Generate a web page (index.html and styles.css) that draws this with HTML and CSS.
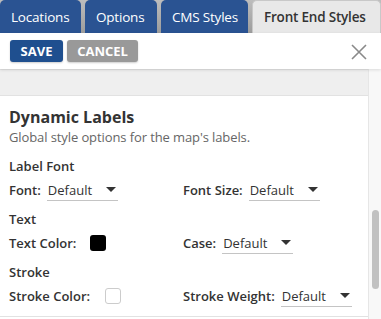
FILE: index.html
```html
<!DOCTYPE html>
<html lang="en">
<head>
    <meta charset="UTF-8">
    <title>Front End Styles</title>
    <link rel="stylesheet" href="styles.css">
</head>
<body>
    <div class="tabs">
        <div class="tab">Locations</div>
        <div class="tab">Options</div>
        <div class="tab">CMS Styles</div>
        <div class="tab active">Front End Styles</div>
    </div>

    <div class="toolbar">
        <button class="btn btn-save">Save</button>
        <button class="btn btn-cancel">Cancel</button>
        <svg class="close" width="16" height="16" viewBox="0 0 16 16">
            <path d="M1 1L15 15M15 1L1 15" stroke="#8a8a8a" stroke-width="1.6" fill="none"/>
        </svg>
    </div>

    <div class="body">
        <div class="panel">
            <div class="panel-top"></div>
            <div class="section">
                <h3>Dynamic Labels</h3>
                <p class="desc">Global style options for the map's labels.</p>

                <div class="group-title">Label Font</div>
                <div class="row">
                    <div class="field">
                        <span class="label">Font:</span>
                        <span class="select">Default <i class="caret"></i></span>
                    </div>
                    <div class="field">
                        <span class="label">Font Size:</span>
                        <span class="select">Default <i class="caret"></i></span>
                    </div>
                </div>

                <div class="group-title">Text</div>
                <div class="row">
                    <div class="field">
                        <span class="label">Text Color:</span>
                        <span class="swatch swatch-black"></span>
                    </div>
                    <div class="field">
                        <span class="label">Case:</span>
                        <span class="select">Default <i class="caret"></i></span>
                    </div>
                </div>

                <div class="group-title">Stroke</div>
                <div class="row">
                    <div class="field">
                        <span class="label">Stroke Color:</span>
                        <span class="swatch swatch-white"></span>
                    </div>
                    <div class="field">
                        <span class="label">Stroke Weight:</span>
                        <span class="select">Default <i class="caret"></i></span>
                    </div>
                </div>
            </div>
        </div>
        <div class="scrollbar">
            <div class="thumb"></div>
        </div>
    </div>
</body>
</html>
```

FILE: styles.css
```css
body {
    margin: 0;
    font-family: 'Open Sans', sans-serif;
    color: #333;
    background: #fff;
    overflow: hidden;
}

.tabs {
    display: flex;
    gap: 4px;
    height: 33px;
    background: linear-gradient(#bdbdbd, #9c9c9c);
}

.tab {
    height: 33px;
    line-height: 35px;
    padding: 0 11px;
    font-size: 13.5px;
    letter-spacing: -0.2px;
    white-space: nowrap;
    color: #fff;
    background: #2a5392;
    border-radius: 5px 5px 0 0;
    box-sizing: border-box;
}

.tab:nth-child(1) { width: 81px; }
.tab:nth-child(2) { width: 72px; }
.tab:nth-child(3) { width: 87px; }

.tab.active {
    flex: 1;
    background: #e8e8e8;
    color: #333;
    font-weight: 600;
    border: 1px solid #c8c8c8;
    border-bottom: none;
    line-height: 33px;
}

.toolbar {
    display: flex;
    align-items: center;
    gap: 4px;
    height: 36px;
    padding: 0 14px 0 10px;
    background: #fff;
    box-shadow: 0 1px 3px rgba(0, 0, 0, 0.12);
    position: relative;
    z-index: 1;
}

.btn {
    height: 22px;
    padding: 0 10px;
    border: none;
    border-radius: 3px;
    font-family: 'Open Sans', sans-serif;
    font-size: 13px;
    font-weight: 700;
    text-transform: uppercase;
    color: #fff;
    box-shadow: 0 1px 2px rgba(0, 0, 0, 0.2);
}

.btn-save { background: #1f4f8f; width: 53px; }
.btn-cancel { background: #999; width: 71px; }

.close {
    margin-left: auto;
    margin-top: 1px;
}

.body {
    display: flex;
    height: 250px;
}

.panel {
    flex: 1;
    border-right: 1px solid #e6e6e6;
}

.panel-top {
    height: 25px;
    background: #efefef;
    border-top: 1px solid #e2e2e2;
    border-bottom: 1px solid #e2e2e2;
}

.section {
    padding: 11px 9px 0;
    border-bottom: 1px solid #e2e2e2;
    height: 209px;
}

h3 {
    margin: 0;
    font-size: 16px;
    font-weight: 700;
    line-height: 20px;
}

.desc {
    margin: 0 0 10px;
    font-size: 13px;
    letter-spacing: -0.1px;
    color: #666;
    line-height: 20px;
}

.group-title {
    font-size: 13px;
    font-weight: 600;
    line-height: 18px;
    margin-top: 8px;
}

.row {
    display: grid;
    grid-template-columns: 174px 1fr;
    height: 24px;
    align-items: center;
    margin-top: 3px;
}

.field {
    display: flex;
    align-items: center;
    gap: 6px;
    font-size: 13px;
}

.label {
    font-weight: 600;
}

.select {
    display: flex;
    align-items: center;
    justify-content: space-between;
    width: 71px;
    height: 22px;
    padding: 0 2px 0 1px;
    box-sizing: border-box;
    border-bottom: 1px solid #c4c4c4;
    color: #333;
}

.caret {
    width: 0;
    height: 0;
    border-left: 5px solid transparent;
    border-right: 5px solid transparent;
    border-top: 5px solid #333;
}

.swatch {
    width: 16px;
    height: 16px;
    border-radius: 3px;
    margin-left: 8px;
    box-sizing: border-box;
}

.swatch-black { background: #000; }
.swatch-white { background: #fff; border: 1px solid #ccc; margin-left: 9px; }

.scrollbar {
    width: 12px;
    background: #f8f8f8;
    padding-top: 141px;
}

.thumb {
    width: 7px;
    height: 79px;
    margin-left: 3px;
    border-radius: 4px;
    background: #c1c1c1;
}
```
